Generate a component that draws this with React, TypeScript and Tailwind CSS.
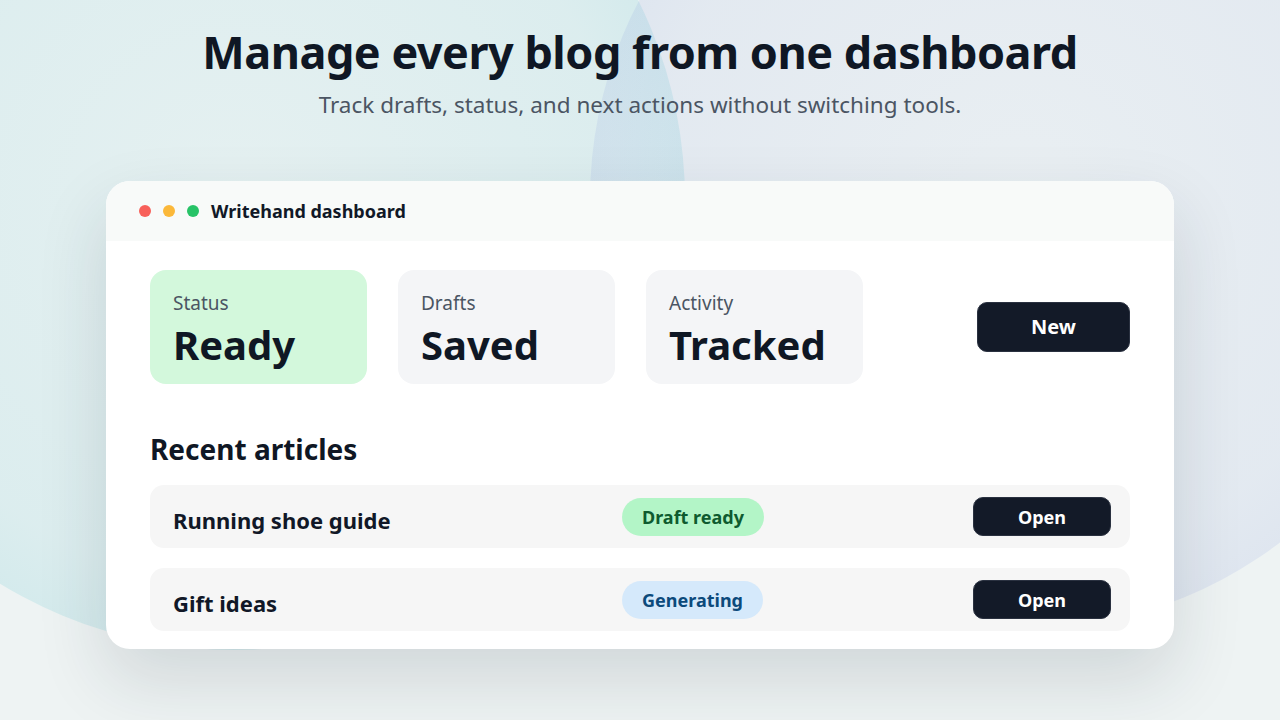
const stats = [
  { label: "Status", value: "Ready", tone: "bg-[#d3f8dc]" },
  { label: "Drafts", value: "Saved", tone: "bg-[#f4f5f7]" },
  { label: "Activity", value: "Tracked", tone: "bg-[#f4f5f7]" },
];

const articles = [
  { title: "Running shoe guide", badge: "Draft ready", badgeTone: "bg-[#b3f5c7] text-[#0e5b2f]" },
  { title: "Gift ideas", badge: "Generating", badgeTone: "bg-[#d5e9fb] text-[#0c4a7b]" },
];

export default function App() {
  return (
    <div className="relative h-[720px] w-[1280px] overflow-hidden bg-[#eef3f3] font-['Noto_Sans',sans-serif] text-[#0f172a]">
      {/* soft backdrop blobs */}
      <div className="pointer-events-none absolute left-[-215px] top-[-250px] h-[900px] w-[900px] rounded-full bg-[radial-gradient(circle,rgba(60,190,200,0.05)_0%,rgba(60,185,198,0.1)_60%,rgba(50,180,195,0.24)_100%)]" />
      <div className="pointer-events-none absolute left-[590px] top-[-230px] h-[860px] w-[860px] rounded-full bg-[radial-gradient(circle,rgba(140,160,225,0.05)_0%,rgba(130,150,220,0.1)_60%,rgba(120,140,215,0.22)_100%)]" />

      <div className="relative flex flex-col items-center">
        <h1 className="mt-[22px] text-[45px] font-bold leading-[60px] tracking-[-0.5px] text-[#0f1724]">
          Manage every blog from one dashboard
        </h1>
        <p className="mt-[8px] text-[22.5px] leading-[30px] text-[#4b5563]">
          Track drafts, status, and next actions without switching tools.
        </p>

        <div className="mt-[61px] w-[1068px] overflow-hidden rounded-[24px] bg-white shadow-[0_30px_70px_rgba(30,41,59,0.14)]">
          <div className="flex h-[60px] items-center gap-3 bg-[#f8faf9] pl-[33px]">
            <span className="h-3 w-3 rounded-full bg-[#f8605a]" />
            <span className="h-3 w-3 rounded-full bg-[#fbb83a]" />
            <span className="h-3 w-3 rounded-full bg-[#27c367]" />
            <span className="text-[18px] font-bold text-[#111827]">Writehand dashboard</span>
          </div>

          <div className="px-[44px] pb-[18px] pt-[29px]">
            <div className="flex items-center">
              <div className="flex gap-[31px]">
                {stats.map((s) => (
                  <div key={s.label} className={`h-[114px] w-[217px] rounded-[16px] px-[23px] pt-[19px] ${s.tone}`}>
                    <div className="text-[19px] leading-[28px] text-[#4b5563]">{s.label}</div>
                    <div className="mt-[2px] text-[40px] font-bold leading-[52px] text-[#0f1724]">{s.value}</div>
                  </div>
                ))}
              </div>
              <button className="ml-auto h-[50px] w-[153px] rounded-[10px] border border-[#2a3140] bg-[#131a28] text-[20px] font-bold text-white">
                New
              </button>
            </div>

            <h2 className="mt-[45px] text-[28px] font-bold leading-[40px] text-[#0f1724]">Recent articles</h2>

            <div className="mt-[16px] flex flex-col gap-[20px]">
              {articles.map((a) => (
                <div key={a.title} className="grid h-[63px] grid-cols-[449px_1fr_auto] items-center rounded-[14px] bg-[#f6f6f6] pl-[23px] pr-[19px]">
                  <span className="pt-[8px] text-[22px] font-bold text-[#111827]">{a.title}</span>
                  <span className={`w-fit rounded-full px-[20px] py-[5px] text-[18px] font-bold leading-[28px] ${a.badgeTone}`}>
                    {a.badge}
                  </span>
                  <button className="h-[39px] w-[138px] rounded-[10px] border border-[#2a3140] bg-[#131a28] text-[18px] font-bold leading-[28px] text-white">
                    Open
                  </button>
                </div>
              ))}
            </div>
          </div>
        </div>
      </div>
    </div>
  );
}
